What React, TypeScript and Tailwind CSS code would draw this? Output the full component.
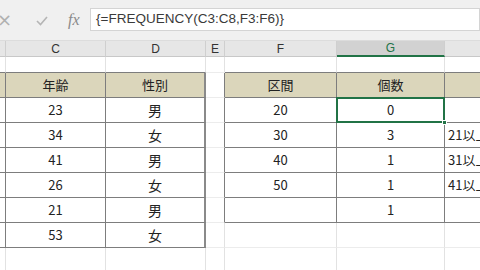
import React from "react";

type Cell = {
  t?: string;
  w: string;
  cls: string;
  align?: "c" | "l";
};

const widths = ["w-[6px]", "w-[100px]", "w-[100px]", "w-[19px]", "w-[112px]", "w-[108px]", "flex-1"];

function Row({ h, cells }: { h: string; cells: Cell[] }) {
  return (
    <div className={`flex ${h}`}>
      {cells.map((c, i) => (
        <div
          key={i}
          className={`${c.w} shrink-0 flex items-center ${c.align === "l" ? "justify-start pl-[3px]" : "justify-center"} overflow-hidden whitespace-nowrap ${c.cls}`}
        >
          {c.t}
        </div>
      ))}
    </div>
  );
}

export default function App() {
  const font = { fontFamily: '"Noto Sans CJK JP", "Noto Sans", sans-serif' };
  const tan = "bg-[#dbd6bb]";
  const left = [
    ["23", "男"],
    ["34", "女"],
    ["41", "男"],
    ["26", "女"],
    ["21", "男"],
    ["53", "女"],
  ];
  const right: [string, string, string][] = [
    ["20", "0", ""],
    ["30", "3", "21以上30以下"],
    ["40", "1", "31以上40以下"],
    ["50", "1", "41以上50以下"],
    ["", "1", ""],
  ];

  const dataRows = left.map((l, idx) => {
    const r = right[idx];
    const inR = idx < right.length;
    return (
      <Row
        key={idx}
        h="h-[25px]"
        cells={[
          { w: widths[0], cls: `border-r border-r-[#7d7d7d] border-b border-b-[#7d7d7d] bg-white` },
          { w: widths[1], t: l[0], cls: `border-r border-r-[#7d7d7d] border-b border-b-[#7d7d7d] bg-white` },
          { w: widths[2], t: l[1], cls: `border-r-2 border-r-[#8a8a8a] border-b border-b-[#7d7d7d] bg-white text-[14px]` },
          { w: widths[3], cls: `border-r ${inR ? "border-r-[#7d7d7d]" : "border-r-[#e2e2e2]"} border-b border-b-[#ececec] bg-white` },
          {
            w: widths[4],
            t: inR ? r[0] : "",
            cls: `border-r ${inR ? "border-r-[#7d7d7d] border-b border-b-[#7d7d7d]" : "border-r-[#e2e2e2] border-b border-b-[#ececec]"} bg-white`,
          },
          {
            w: widths[5],
            t: inR ? r[1] : "",
            cls: `border-r ${inR ? "border-r-[#7d7d7d] border-b border-b-[#7d7d7d]" : "border-r-[#e2e2e2] border-b border-b-[#ececec]"} bg-white`,
          },
          {
            w: widths[6],
            t: inR ? r[2] : "",
            align: "l",
            cls: `${inR ? "border-b border-b-[#7d7d7d]" : "border-b border-b-[#ececec]"} bg-white`,
          },
        ]}
      />
    );
  });

  return (
    <div className="w-[480px] h-[270px] overflow-hidden bg-white text-[13px] text-[#222]" style={font}>
      {/* formula bar */}
      <div className="h-[41px] bg-[#f0f0f0] flex items-start pt-[8px] border-b border-[#dcdcdc]">
        <div className="w-[90px] h-[23px] flex items-center shrink-0 overflow-hidden">
          <span
            className="ml-[-3px] text-[18px] text-[#b0b0b0] leading-none"
            style={{ fontFamily: '"DejaVu Sans", sans-serif' }}
          >
            ×
          </span>
          <svg className="ml-[24px] mt-[2px]" width="12" height="10" viewBox="0 0 12 10">
            <path d="M1 5 L4.5 8.5 L11 1" stroke="#b5b5b5" strokeWidth="1.6" fill="none" />
          </svg>
          <span
            className="ml-[20px] text-[16px] italic text-[#8a8a8a] leading-none"
            style={{ fontFamily: '"Liberation Serif", serif' }}
          >
            fx
          </span>
        </div>
        <div
          className="flex-1 h-[23px] bg-white border border-[#d4d4d4] flex items-center pl-[5px] text-[13.5px] text-[#3a3a3a]"
          style={{ fontFamily: '"Liberation Sans", sans-serif' }}
        >
          {"{=FREQUENCY(C3:C8,F3:F6)}"}
        </div>
      </div>
      {/* column headers */}
      <div className="flex h-[16px] bg-[#e6e6e6] text-[12px] text-[#333]" style={{ fontFamily: '"Liberation Sans", sans-serif' }}>
        {["", "C", "D", "E", "F", "G", ""].map((l, i) => (
          <div
            key={i}
            className={`${widths[i]} shrink-0 flex items-center justify-center ${i < 6 ? "border-r border-r-[#cfcfcf]" : ""} ${
              i === 5 ? "bg-[#d2d2d2] text-[#217346] border-b-2 border-b-[#217346]" : "border-b border-b-[#c8c8c8]"
            }`}
          >
            {l}
          </div>
        ))}
      </div>
      <div>
        <Row
          h="h-[16px]"
          cells={[
            { w: widths[0], cls: "border-r border-r-[#e2e2e2] border-b border-b-[#7d7d7d]" },
            { w: widths[1], cls: "border-r border-r-[#e2e2e2] border-b border-b-[#7d7d7d]" },
            { w: widths[2], cls: "border-r border-r-[#e2e2e2] border-b border-b-[#7d7d7d]" },
            { w: widths[3], cls: "border-r border-r-[#e2e2e2] border-b border-b-[#ececec]" },
            { w: widths[4], cls: "border-r border-r-[#e2e2e2] border-b border-b-[#7d7d7d]" },
            { w: widths[5], cls: "border-r border-r-[#e2e2e2] border-b border-b-[#7d7d7d]" },
            { w: widths[6], cls: "border-b border-b-[#7d7d7d]" },
          ]}
        />
        <Row
          h="h-[25px]"
          cells={[
            { w: widths[0], cls: `border-r border-r-[#7d7d7d] border-b border-b-[#7d7d7d] ${tan}` },
            { w: widths[1], t: "年齢", cls: `border-r border-r-[#7d7d7d] border-b border-b-[#7d7d7d] ${tan}` },
            { w: widths[2], t: "性別", cls: `border-r-2 border-r-[#8a8a8a] border-b border-b-[#7d7d7d] ${tan}` },
            { w: widths[3], cls: `border-r border-r-[#7d7d7d] border-b border-b-[#ececec] bg-white` },
            { w: widths[4], t: "区間", cls: `border-r border-r-[#7d7d7d] border-b border-b-[#7d7d7d] ${tan}` },
            { w: widths[5], t: "個数", cls: `border-r border-r-[#7d7d7d] border-b border-b-[#7d7d7d] ${tan}` },
            { w: widths[6], cls: `border-b border-b-[#7d7d7d] ${tan}` },
          ]}
        />
        <div className="relative">
          {dataRows}
          <div className="absolute left-[336px] top-[-1px] w-[109px] h-[26px] border-2 border-[#217346] pointer-events-none">
            <div className="absolute right-[-4px] bottom-[-4px] w-[5px] h-[5px] bg-[#217346] border border-white" />
          </div>
        </div>
        <Row
          h="h-[25px]"
          cells={[
            { w: widths[0], cls: "border-r border-r-[#e2e2e2]" },
            { w: widths[1], cls: "border-r border-r-[#e2e2e2]" },
            { w: widths[2], cls: "border-r border-r-[#e2e2e2]" },
            { w: widths[3], cls: "border-r border-r-[#e2e2e2]" },
            { w: widths[4], cls: "border-r border-r-[#e2e2e2]" },
            { w: widths[5], cls: "border-r border-r-[#e2e2e2]" },
            { w: widths[6], cls: "" },
          ]}
        />
      </div>
    </div>
  );
}
